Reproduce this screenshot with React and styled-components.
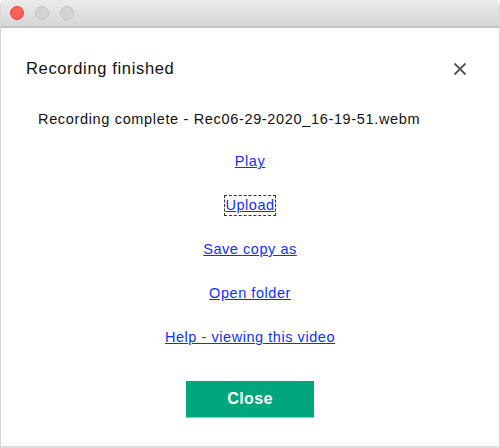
import React from 'react'
import styled, { createGlobalStyle } from 'styled-components'

const GlobalStyle = createGlobalStyle`
  html, body {
    margin: 0;
    padding: 0;
    background: #ffffff;
  }
  body {
    font-family: "Liberation Sans", Arial, sans-serif;
  }
`

const Window = styled.div`
  width: 500px;
  height: 448px;
  box-sizing: border-box;
  display: flex;
  flex-direction: column;
  border-left: 1px solid #d6d6d6;
  border-right: 1px solid #d6d6d6;
  border-bottom: 2px solid #dcdcdc;
  border-radius: 5px 5px 0 0;
  overflow: hidden;
  background: #ffffff;
`

const TitleBar = styled.div`
  height: 26px;
  flex-shrink: 0;
  display: flex;
  align-items: center;
  gap: 6px;
  padding-left: 4px;
  background: linear-gradient(#ebebeb, #d6d6d6);
  border-bottom: 2px solid #c4c4c4;
`

const Light = styled.span`
  width: 14px;
  height: 14px;
  border-radius: 50%;
  box-sizing: border-box;
  margin-left: 5px;
  background: ${p => p.color};
  border: 1px solid ${p => p.rim};
`

const Body = styled.div`
  flex: 1;
  display: flex;
  flex-direction: column;
`

const Header = styled.div`
  display: flex;
  align-items: center;
  justify-content: space-between;
  padding: 31px 32px 0 25px;
`

const Heading = styled.h1`
  margin: 0;
  font-size: 16.5px;
  letter-spacing: 0.65px;
  font-weight: normal;
  color: #111111;
`

const CloseX = styled.button`
  border: none;
  background: none;
  padding: 0;
  width: 14px;
  height: 14px;
  display: flex;
  cursor: pointer;
`

const Message = styled.p`
  margin: 33px 0 0 37px;
  font-size: 14.5px;
  letter-spacing: 0.66px;
  color: #111111;
`

const Links = styled.div`
  display: flex;
  flex-direction: column;
  align-items: center;
  gap: 25px;
  margin-top: 25px;
`

const LinkItem = styled.a`
  font-size: 14.5px;
  line-height: 19px;
  letter-spacing: 0.55px;
  color: #1030ff;
  text-decoration: underline;
  outline: ${p => (p.focused ? '1px dashed #333' : 'none')};
  outline-offset: 0;
`

const CloseButton = styled.button`
  align-self: center;
  margin-top: 34px;
  width: 128px;
  height: 37px;
  border: none;
  border-bottom: 1px solid #7fd3bd;
  background: #00a67e;
  color: #ffffff;
  font-family: "Liberation Sans", Arial, sans-serif;
  font-size: 16px;
  letter-spacing: 0.4px;
  font-weight: bold;
  cursor: pointer;
`

const App = () => {
  return (
    <Window>
      <GlobalStyle />
      <TitleBar>
        <Light color="#fe5f57" rim="#e2463f" />
        <Light color="#d3d3d3" rim="#c2c2c2" />
        <Light color="#d3d3d3" rim="#c2c2c2" />
      </TitleBar>
      <Body>
        <Header>
          <Heading>Recording finished</Heading>
          <CloseX aria-label="Close">
            <svg width="14" height="14" viewBox="0 0 14 14">
              <path d="M1.5 1.5 L12.5 12.5 M12.5 1.5 L1.5 12.5" stroke="#555" strokeWidth="1.8" />
            </svg>
          </CloseX>
        </Header>
        <Message>Recording complete - Rec06-29-2020_16-19-51.webm</Message>
        <Links>
          <LinkItem href="#">Play</LinkItem>
          <LinkItem href="#" focused>Upload</LinkItem>
          <LinkItem href="#">Save copy as</LinkItem>
          <LinkItem href="#">Open folder</LinkItem>
          <LinkItem href="#">Help - viewing this video</LinkItem>
        </Links>
        <CloseButton>Close</CloseButton>
      </Body>
    </Window>
  )
}

export default App
